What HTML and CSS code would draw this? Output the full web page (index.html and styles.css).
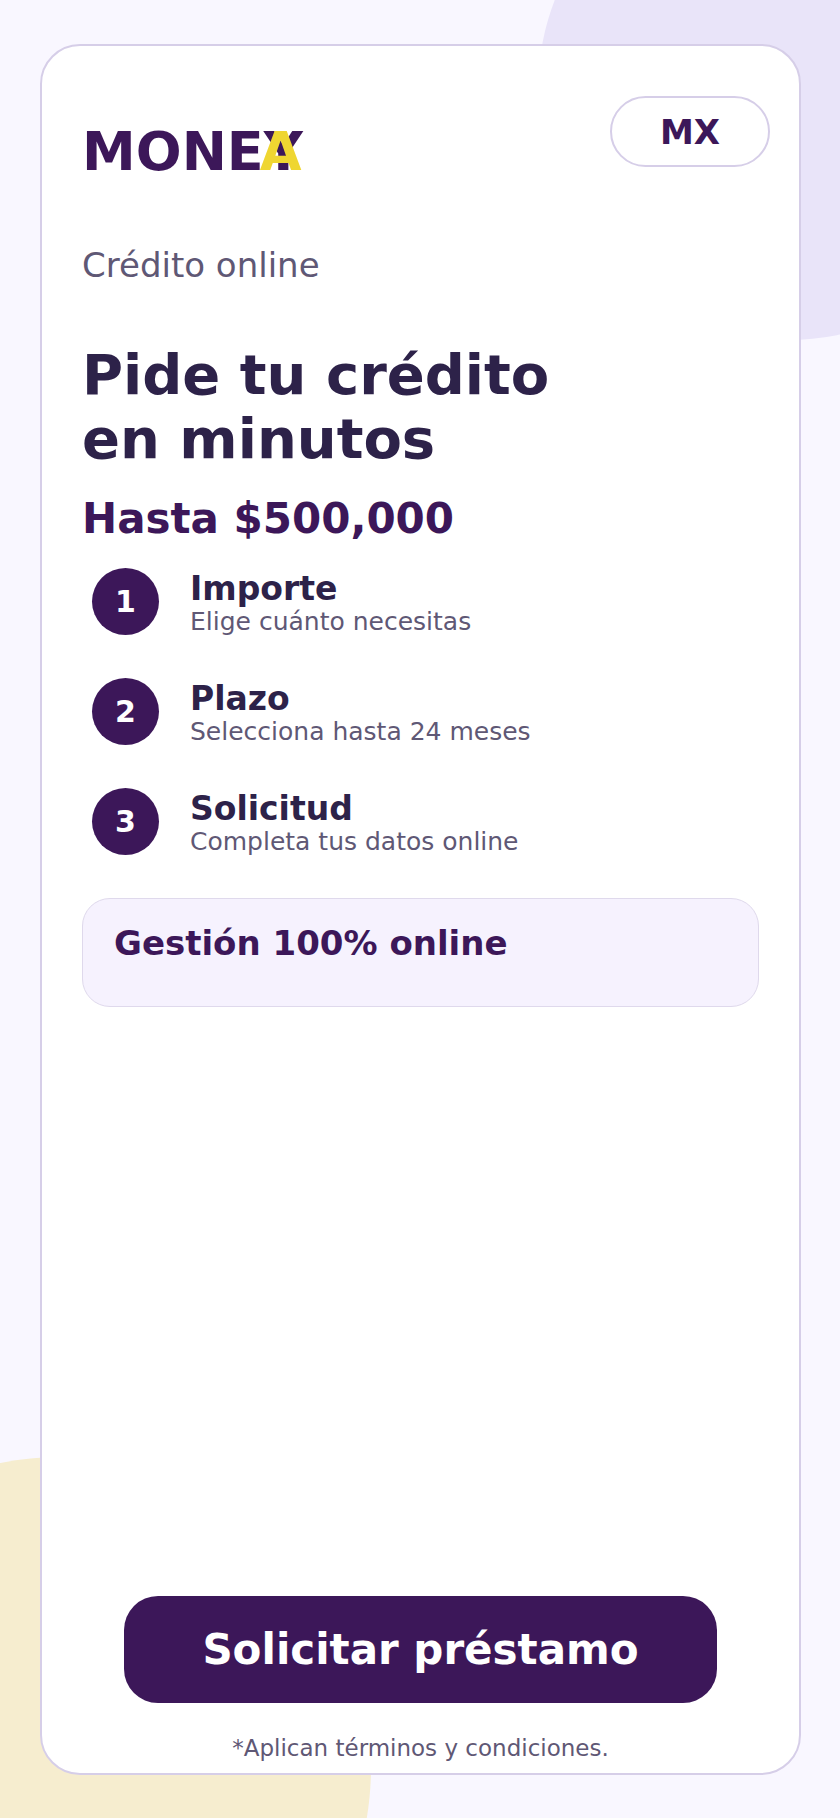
FILE: index.html
```html
<!DOCTYPE html>
<html lang="es">
<head>
    <meta charset="UTF-8">
    <meta name="viewport" content="width=device-width, initial-scale=1.0">
    <title>MoneyA - Crédito online</title>
    <link rel="stylesheet" href="styles.css">
</head>
<body>
    <div class="page">
        <div class="blob blob-purple"></div>
        <div class="blob blob-yellow"></div>

        <main class="card">
            <header class="top">
                <div class="logo">MONEY<span class="logo-a">A</span></div>
                <button class="country">MX</button>
            </header>

            <p class="kicker">Crédito online</p>
            <h1 class="title">Pide tu crédito<br>en minutos</h1>
            <p class="amount">Hasta $500,000</p>

            <ol class="steps">
                <li class="step">
                    <span class="step-num">1</span>
                    <div class="step-text">
                        <strong>Importe</strong>
                        <span>Elige cuánto necesitas</span>
                    </div>
                </li>
                <li class="step">
                    <span class="step-num">2</span>
                    <div class="step-text">
                        <strong>Plazo</strong>
                        <span>Selecciona hasta 24 meses</span>
                    </div>
                </li>
                <li class="step">
                    <span class="step-num">3</span>
                    <div class="step-text">
                        <strong>Solicitud</strong>
                        <span>Completa tus datos online</span>
                    </div>
                </li>
            </ol>

            <div class="note">Gestión 100% online</div>

            <div class="actions">
                <button class="cta">Solicitar préstamo</button>
                <p class="legal">*Aplican términos y condiciones.</p>
            </div>
        </main>
    </div>
</body>
</html>
```

FILE: styles.css
```css
* {
    box-sizing: border-box;
}
body {
    margin: 0;
    font-family: "DejaVu Sans", sans-serif;
    color: #2d2249;
}
.page {
    position: relative;
    height: 1818px;
    overflow: hidden;
    padding: 44px 39px 43px 40px;
    background-color: #f9f7ff;
}
.blob {
    position: absolute;
    border-radius: 50%;
}
.blob-purple {
    width: 500px;
    height: 500px;
    left: 538px;
    top: -160px;
    background-color: #e9e4f9;
}
.blob-yellow {
    width: 620px;
    height: 620px;
    left: -249px;
    top: 1457px;
    background-color: #f6edcf;
}
.card {
    position: relative;
    height: 100%;
    display: flex;
    flex-direction: column;
    padding: 50px 40px 0;
    background-color: #fff;
    border: 2px solid #d6cee8;
    border-radius: 40px;
}
.top {
    display: flex;
    justify-content: space-between;
    align-items: flex-start;
    margin-right: -11px;
}
.logo {
    margin-top: 24px;
    font-size: 54px;
    font-weight: 700;
    line-height: 63px;
    color: #3c1759;
}
.logo-a {
    margin-left: -43px;
    color: #efd631;
}
.country {
    width: 160px;
    height: 71px;
    padding: 0;
    background-color: #fff;
    border: 2px solid #d6cee8;
    border-radius: 36px;
    font-family: inherit;
    font-size: 34px;
    font-weight: 700;
    color: #3c1759;
}
.kicker {
    margin: 62px 0 0;
    font-size: 34px;
    line-height: 40px;
    color: #5f5875;
}
.title {
    margin: 58px 0 0;
    font-size: 56px;
    line-height: 64px;
    font-weight: 700;
    color: #2d2249;
}
.amount {
    margin: 23px 0 0;
    font-size: 42px;
    line-height: 50px;
    font-weight: 700;
    color: #3c1759;
}
.steps {
    list-style: none;
    margin: 23px 0 0;
    padding: 0 0 0 10px;
    display: flex;
    flex-direction: column;
    gap: 41px;
}
.step {
    display: flex;
    align-items: center;
    gap: 31px;
}
.step-num {
    flex: none;
    width: 67px;
    height: 67px;
    display: flex;
    align-items: center;
    justify-content: center;
    border-radius: 50%;
    background-color: #3c1759;
    color: #fff;
    font-size: 30px;
    font-weight: 700;
}
.step-text {
    display: flex;
    flex-direction: column;
    padding-top: 4px;
}
.step-text strong {
    font-size: 33px;
    line-height: 36px;
}
.step-text span {
    font-size: 25px;
    line-height: 29px;
    color: #5f5875;
}
.note {
    margin-top: 42px;
    height: 109px;
    padding: 24px 31px;
    background-color: #f6f2fe;
    border: 1px solid #dfd9ec;
    border-radius: 28px;
    font-size: 34px;
    line-height: 40px;
    font-weight: 700;
    color: #3c1759;
}
.actions {
    margin-top: auto;
    display: flex;
    flex-direction: column;
    align-items: center;
}
.cta {
    width: 593px;
    height: 107px;
    border: none;
    border-radius: 34px;
    background-color: #3c1759;
    color: #fff;
    font-family: inherit;
    font-size: 42px;
    font-weight: 700;
}
.legal {
    margin: 31px 0 11px;
    font-size: 23px;
    line-height: 28px;
    color: #5f5875;
}
```
